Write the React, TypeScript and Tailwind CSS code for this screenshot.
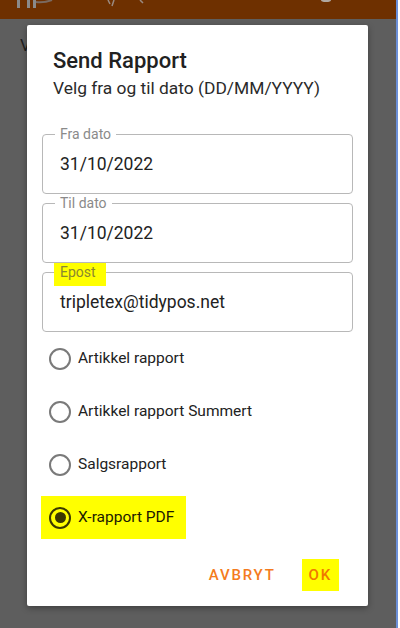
import React from "react";

function Field({ label, value, highlight }: { label: string; value: string; highlight?: boolean }) {
  return (
    <div className="relative h-[60px] rounded-[4px] border border-[#b8b8b8] flex items-center pl-[17px]">
      {highlight ? (
        <span className="absolute left-[11px] top-[-10px] h-[23px] w-[52px] bg-[#ffff00] flex items-start pl-[6px] pt-[1px] text-[14px] leading-[16px] text-[#8a8730]">
          {label}
        </span>
      ) : (
        <span className="absolute left-[12px] top-[-9px] bg-white px-[5px] text-[14px] leading-[16px] text-[#8a8a8a]">
          {label}
        </span>
      )}
      <span className="text-[17.5px] text-[#222222] leading-[24px]">{value}</span>
    </div>
  );
}

function Radio({ label, checked }: { label: string; checked?: boolean }) {
  if (checked) {
    return (
      <div className="h-[53px] flex items-center">
        <div className="h-[43px] bg-[#ffff00] flex items-center pl-[8px] pr-[12px]">
          <div className="w-[22px] h-[22px] rounded-full border-[2.3px] border-[#3b3800] flex items-center justify-center">
            <div className="w-[11px] h-[11px] rounded-full bg-[#3b3800]" />
          </div>
          <span className="ml-[7px] text-[15.5px] text-[#1c1a00]">{label}</span>
        </div>
      </div>
    );
  }
  return (
    <div className="h-[53px] flex items-center pl-[8px]">
      <div className="w-[22px] h-[22px] rounded-full border-[2.3px] border-[#7a7a7a]" />
      <span className="ml-[7px] text-[15.5px] text-[#222222]">{label}</span>
    </div>
  );
}

export default function App() {
  return (
    <div className="relative w-[400px] h-[628px] overflow-hidden bg-[#5e5e5e] font-['Roboto',sans-serif]">
      <div className="h-[19px] bg-[#6e3000] relative">
        <svg className="absolute left-0 top-0" width="400" height="19" viewBox="0 0 400 19">
          <rect x="17" y="0" width="3" height="8" fill="#8a8a8a" />
          <rect x="27" y="0" width="3" height="8" fill="#8a8a8a" />
          <rect x="33" y="0" width="3" height="8" fill="#8a8a8a" />
          <path d="M36 2 Q44 3 52 0" stroke="#7a6a60" strokeWidth="2" fill="none" />
          <path d="M108 0 L110 4 M114 0 L112 6 M140 0 L143 3" stroke="#9a8a80" strokeWidth="1.5" fill="none" />
          <ellipse cx="326" cy="0" rx="5" ry="2" fill="#b0a8a0" />
        </svg>
      </div>
      <div className="absolute left-[20px] top-[33px] text-[17px] text-[#1e1e1e]">V</div>
      <div className="absolute right-0 top-0 h-[628px] w-[4px] flex">
        <div className="w-[2px] bg-[#6b8fd8]" />
        <div className="w-[2px] bg-white" />
      </div>

      <div className="absolute left-[27px] top-[25px] w-[341px] bg-white rounded-[2px] shadow-[0_2px_6px_rgba(0,0,0,0.35)] flex flex-col pt-[22px] pb-[15px]">
        <div className="px-[26px]">
          <div className="text-[22px] font-medium leading-[28px] text-[#212121]">Send Rapport</div>
          <div className="mt-[2px] text-[17.4px] leading-[22px] text-[#2a2a2a]">Velg fra og til dato (DD/MM/YYYY)</div>
        </div>
        <div className="mt-[35px] px-[15px] flex flex-col gap-[9px]">
          <Field label="Fra dato" value="31/10/2022" />
          <Field label="Til dato" value="31/10/2022" />
          <Field label="Epost" value="tripletex@tidypos.net" highlight />
        </div>
        <div className="pl-[14px] flex flex-col">
          <Radio label="Artikkel rapport" />
          <Radio label="Artikkel rapport Summert" />
          <Radio label="Salgsrapport" />
          <Radio label="X-rapport PDF" checked />
        </div>
        <div className="mt-[15px] flex justify-end items-center pr-[29px] gap-[19px]">
          <div className="h-[32px] px-[7px] flex items-center text-[15px] font-medium tracking-[1.8px] text-[#f47b20]">AVBRYT</div>
          <div className="h-[32px] px-[7px] flex items-center bg-[#ffff00] text-[15px] font-medium tracking-[1.8px] text-[#f07800]">OK</div>
        </div>
      </div>
    </div>
  );
}
